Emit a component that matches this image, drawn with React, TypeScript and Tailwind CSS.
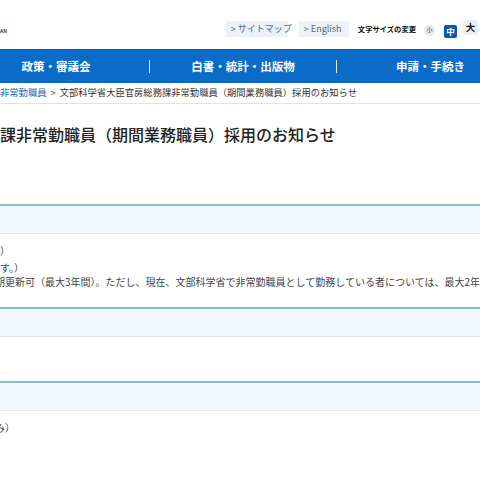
import React from "react";

const JP = "font-['Noto_Sans_CJK_JP','Noto_Sans',sans-serif]";

const NAV = ["政策・審議会", "白書・統計・出版物", "申請・手続き"];

function SectionHead() {
  return <div className="h-[30px] shrink-0 border-t-2 border-b border-t-[#86bdcd] border-b-[#e2e6e9] bg-[#f2f9fc]" />;
}

export default function App() {
  return (
    <div className={`w-[480px] h-[480px] overflow-hidden bg-white text-[#333] ${JP} flex flex-col`}>
      {/* top utility bar */}
      <div className="h-[49px] shrink-0 flex items-start">
        <span className="mt-[28px] text-[5px] font-bold text-[#444] leading-none">AN</span>
        <div className="ml-auto flex items-center mt-[19px] mr-[2px] whitespace-nowrap">
          <a className="h-[16px] w-[62px] pl-[5px] bg-[#eef1f5] text-[9px] text-[#4a6a96] flex items-center leading-none">
            &gt; サイトマップ
          </a>
          <a className="h-[16px] w-[50px] ml-[11px] pl-[5px] bg-[#eef1f5] text-[9px] text-[#4a6a96] flex items-center leading-none">
            &gt; English
          </a>
          <span className="ml-[9px] text-[7.3px] font-bold text-[#111] leading-none mt-[3px]">文字サイズの変更</span>
          <span className="ml-[8px] mt-[3px] w-[11px] h-[11px] rounded-full bg-[#e6eaee] text-[6px] flex items-center justify-center leading-none">
            小
          </span>
          <span className="ml-[9px] mt-[6px] w-[13px] h-[13px] rounded-[2px] bg-[#0b56ae] text-white text-[8.5px] font-bold flex items-center justify-center leading-none">
            中
          </span>
          <span className="ml-[6px] -mt-[2px] w-[15px] h-[15px] rounded-[2px] bg-[#eceff2] text-[#111] text-[9.5px] font-bold flex items-center justify-center leading-none">
            大
          </span>
        </div>
      </div>

      {/* global navigation */}
      <nav className="h-[34px] shrink-0 bg-[#0a6bc8] border-t border-[#0a5cae] flex -ml-[37px]">
        {NAV.map((label, i) => (
          <div key={label} className="w-[187px] shrink-0 flex items-center">
            <span className="flex-1 text-center text-white font-bold text-[11.5px] leading-none">{label}</span>
            {i < NAV.length - 1 && <span className="w-px h-[13px] bg-white/90" />}
          </div>
        ))}
      </nav>

      {/* breadcrumb */}
      <div className="h-[21px] shrink-0 border-b border-[#dfe3e6] flex items-center text-[9.3px] leading-none whitespace-nowrap">
        <a className="text-[#1a62b8]">非常勤職員</a>
        <span className="mx-[4px] text-[#555]">&gt;</span>
        <span className="text-[#333]">文部科学省大臣官房総務課非常勤職員（期間業務職員）採用のお知らせ</span>
      </div>

      {/* page title */}
      <h1 className="mt-[21px] h-[18px] text-[16px] leading-[18px] font-medium text-[#222] whitespace-nowrap">
        課非常勤職員（期間業務職員）採用のお知らせ
      </h1>

      <div className="h-[61px] shrink-0" />
      <SectionHead />

      <div className="h-[73px] shrink-0 text-[10px] leading-[14px] text-[#444] whitespace-nowrap pt-[10px]">
        <p>）</p>
        <p className="mt-[3px]">す。）</p>
        <p className="-ml-[5px]">期更新可（最大3年間）。ただし、現在、文部科学省で非常勤職員として勤務している者については、最大2年間</p>
      </div>

      <SectionHead />

      <div className="h-[44px] shrink-0 flex flex-col">
        <div className="mt-auto mb-[8px] border-b border-dotted border-[#eceff1]" />
      </div>

      <SectionHead />

      <div className="text-[10px] leading-[14px] text-[#444] whitespace-nowrap pt-[10px]">
        <p className="-ml-[5px]">み）</p>
      </div>
    </div>
  );
}
